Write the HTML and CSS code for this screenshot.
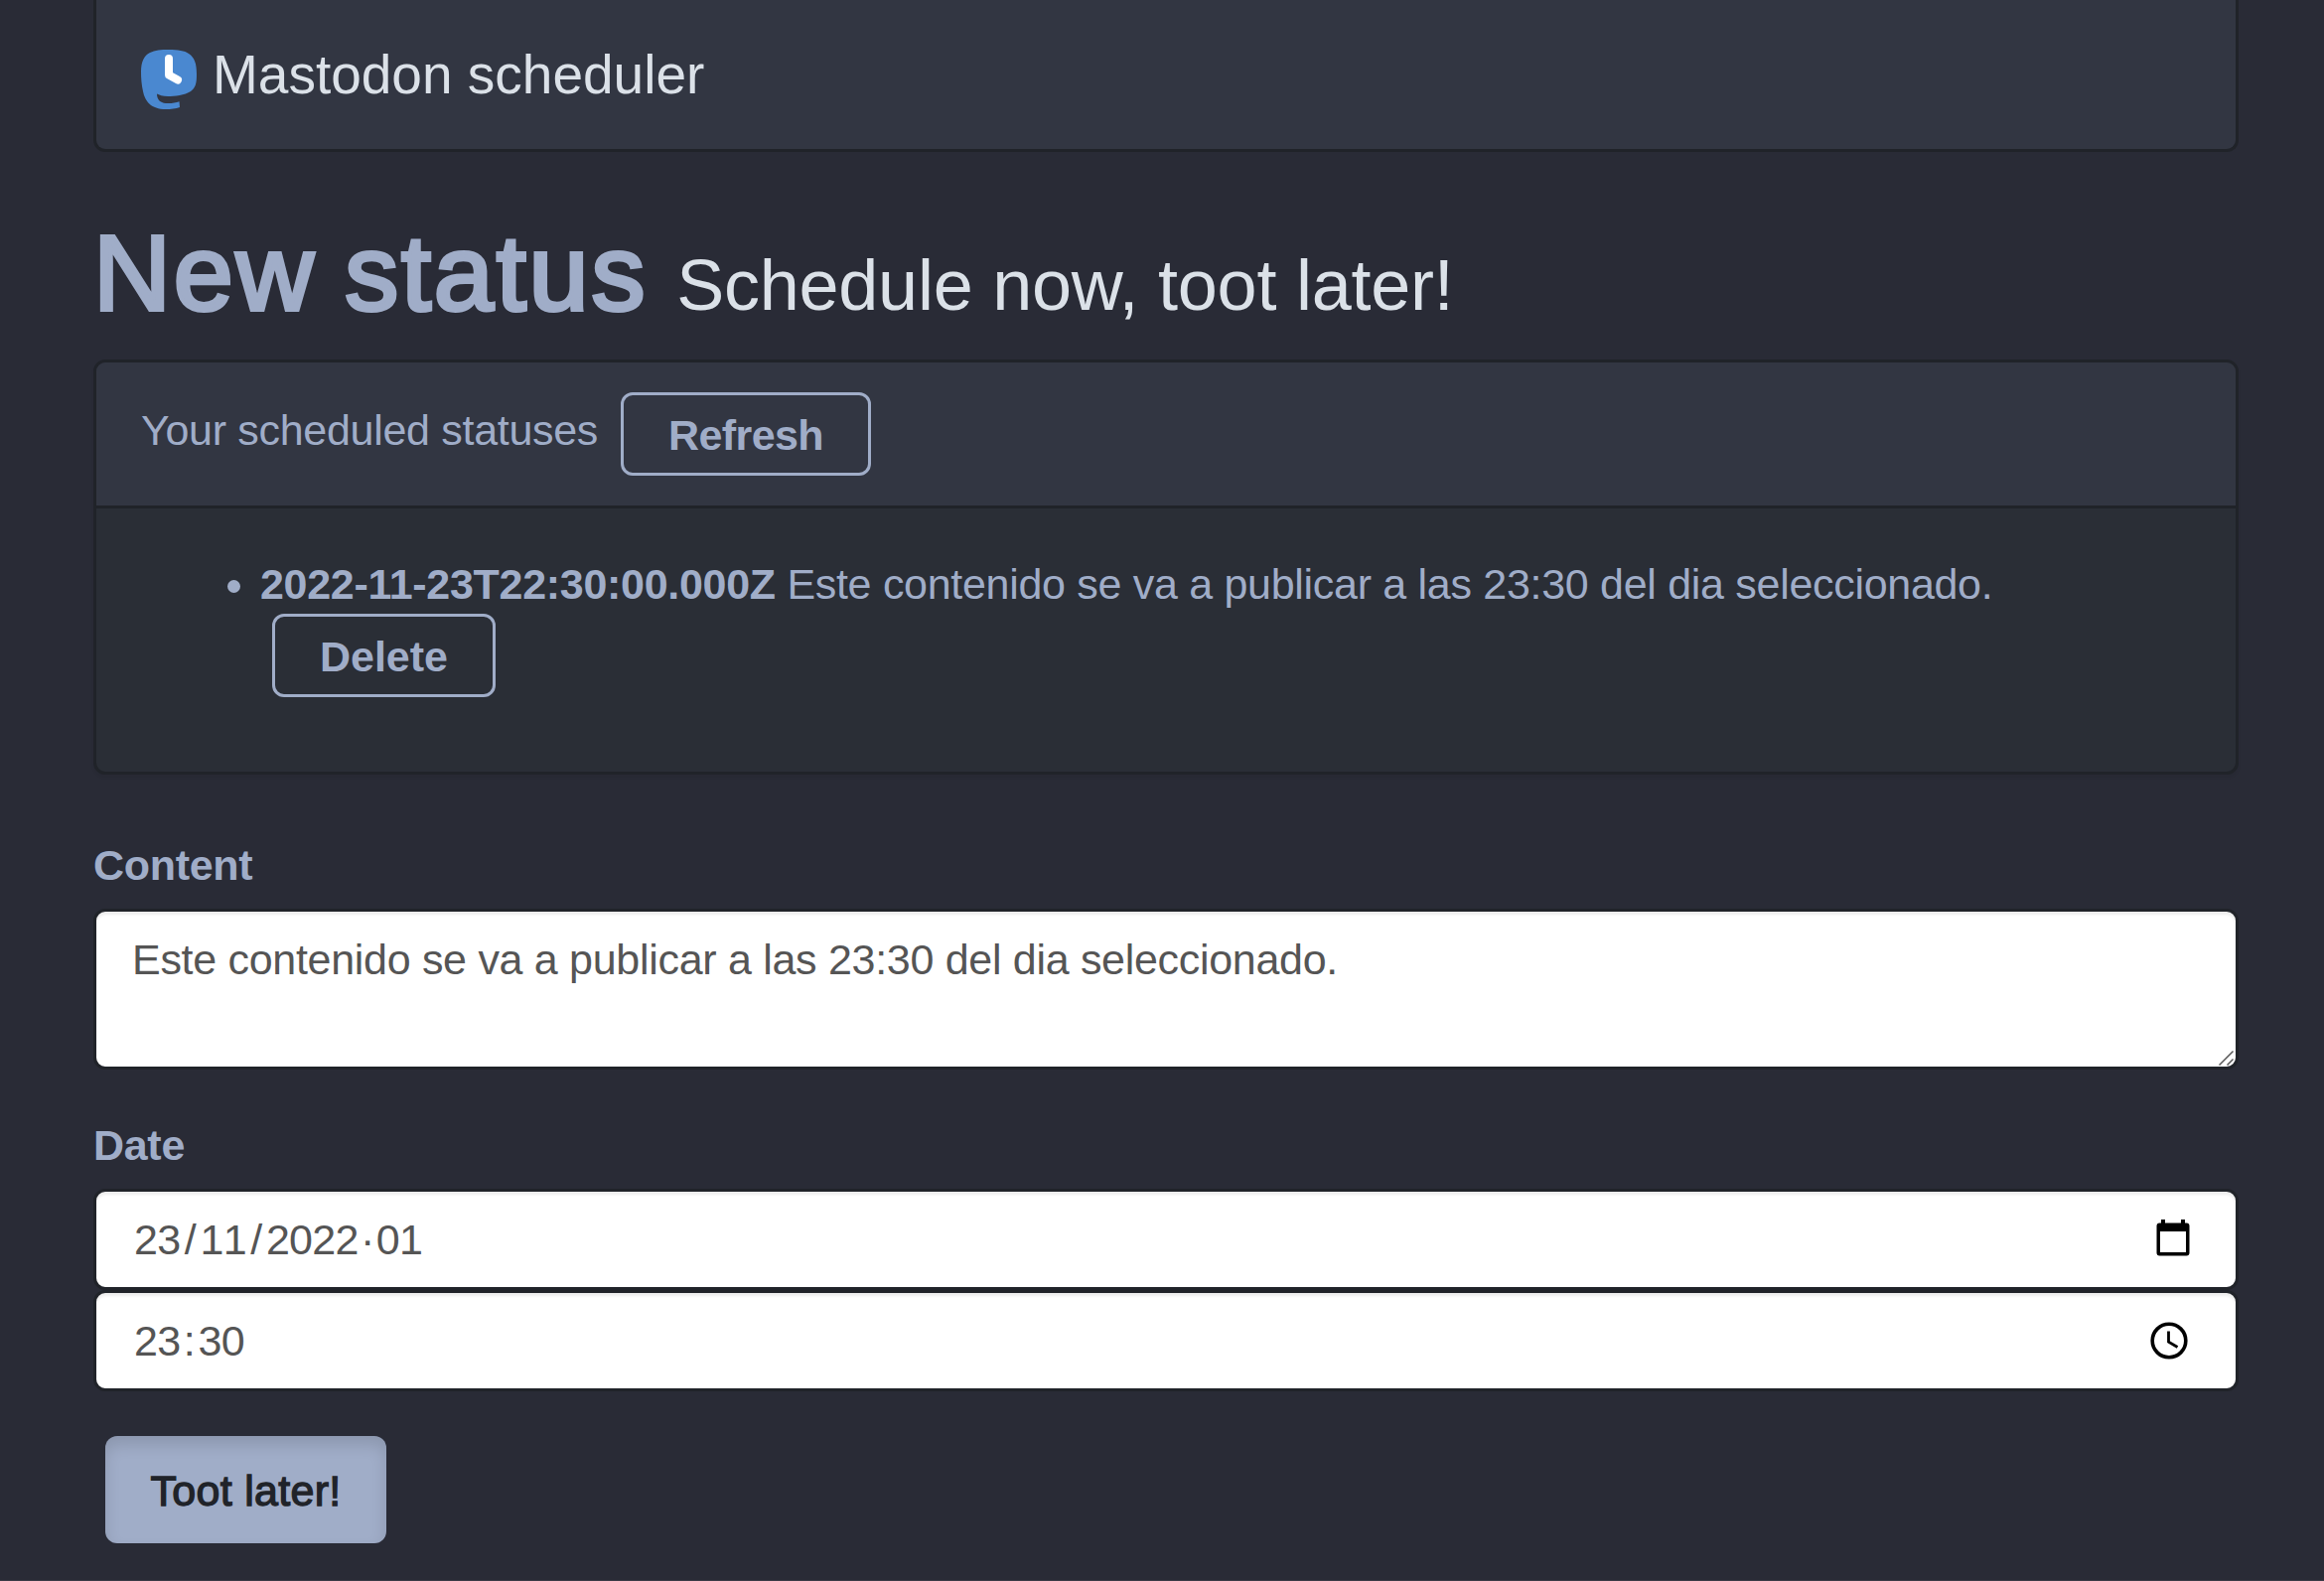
FILE: index.html
```html
<!DOCTYPE html>
<html lang="en">
<head>
<meta charset="utf-8">
<title>Mastodon scheduler</title>
<link rel="stylesheet" href="styles.css">
</head>
<body>
<div class="page">
  <header class="navbar">
    <svg class="logo" viewBox="0 0 56 60" width="56" height="60">
      <path fill="#4a88d0" d="M28 0C37 0 44 1 48 4C54 8 56 14 56 25C56 34 55 38 50 42C44 46 34 47 27 47C22 47 18 45.500 16 44.500C16 50 19 53.500 25 54C30 54.400 35 53.500 38.500 52.300L39 58C35 59.600 30 60 25 60C10 60 4 52 2 42C0.500 35 0 29 0 22C0 12 3 6 9 3C14 0.500 20 0 28 0Z"/>
      <path fill="none" stroke="#fff" stroke-width="8" stroke-linecap="round" stroke-linejoin="round" d="M28 9V25.500L37 30.500"/>
    </svg>
    <span class="brand">Mastodon scheduler</span>
  </header>

  <h1 class="title"><span class="title-main">New status</span><small class="title-sub">Schedule now, toot later!</small></h1>

  <section class="panel">
    <div class="panel-head">
      <span class="panel-title">Your scheduled statuses</span>
      <button class="btn btn-refresh">Refresh</button>
    </div>
    <div class="panel-body">
      <ul class="statuses">
        <li class="status">
          <div class="status-text"><strong class="stamp">2022-11-23T22:30:00.000Z</strong> <span class="message">Este contenido se va a publicar a las 23:30 del dia seleccionado.</span></div>
          <button class="btn btn-delete">Delete</button>
        </li>
      </ul>
    </div>
  </section>

  <div class="label label-content">Content</div>
  <div class="field area">
    <span class="area-text">Este contenido se va a publicar a las 23:30 del dia seleccionado.</span>
    <svg class="grip" viewBox="0 0 15 15" width="15" height="15"><path fill="none" stroke="#555" stroke-width="1.500" d="M0.500 14.500L14.500 0.500M8.500 14.500L14.500 8.500"/></svg>
  </div>

  <div class="label label-date">Date</div>
  <div class="field">
    <span class="value">23<span class="slash">/</span>11<span class="slash">/</span>2022<span class="mark">·</span>01</span>
    <svg class="calendar" viewBox="0 0 34 37" width="34" height="37"><path fill="#000" fill-rule="evenodd" d="M5 0H9V3.500H25V0H29V3.500H30.500Q33.500 3.500 33.500 6.500V33.500Q33.500 36.500 30.500 36.500H3.500Q0.500 36.500 0.500 33.500V6.500Q0.500 3.500 3.500 3.500H5ZM4 12V33H30V12Z"/></svg>
  </div>
  <div class="field">
    <span class="value">23<span class="mark">:</span>30</span>
    <svg class="clock" viewBox="0 0 38 38" width="38" height="38"><circle cx="19" cy="19" r="16.800" fill="none" stroke="#000" stroke-width="3.600"/><path fill="none" stroke="#000" stroke-width="2.800" d="M18.500 9.500V20.300L27.500 25.500"/></svg>
  </div>

  <button class="submit">Toot later!</button>
</div>
</body>
</html>
```
FILE: styles.css
```css
* { box-sizing: border-box; }

body {
  margin: 0;
  height: 1592px;
  overflow: hidden;
  background: #292b36;
  border-bottom: 1px solid #3a3b46;
  color: #a0adc8;
  font: 43px/60px "Liberation Sans", Arial, sans-serif;
  letter-spacing: -0.3px;
}

.page {
  width: 2160px;
  margin-left: 94px;
  display: flex;
  flex-direction: column;
}

.navbar {
  height: 153px;
  padding: 45px 45px 0;
  display: flex;
  align-items: flex-start;
  background: #323642;
  border: 3px solid #202329;
  border-top: 0;
  border-radius: 0 0 12px 12px;
}
.logo { margin-top: 5px; }
.brand {
  margin-left: 16px;
  color: #dbe1e8;
  font-size: 55px;
  letter-spacing: 0;
  white-space: nowrap;
}

.title {
  display: flex;
  align-items: baseline;
  height: 120px;
  margin: 62px 0 27px;
  font-weight: 400;
  line-height: 120px;
  white-space: nowrap;
}
.title-main {
  font-size: 108px;
  letter-spacing: 2.8px;
  word-spacing: -4px;
  -webkit-text-stroke: 4px #a0adc8;
}
.title-sub {
  margin-left: 29px;
  color: #dbe1e8;
  font-size: 72px;
  letter-spacing: -0.25px;
}

.panel {
  height: 418px;
  border: 3px solid #202329;
  border-radius: 12px;
  background: #2a2e36;
  box-shadow: 0 3px 3px rgba(0, 0, 0, 0.05);
}
.panel-head {
  height: 147px;
  padding: 30px 45px;
  display: flex;
  align-items: flex-start;
  background: #323642;
  border-bottom: 3px solid #202329;
  border-radius: 9px 9px 0 0;
}
.panel-title {
  margin-top: 8px;
  width: 483px;
  white-space: nowrap;
}

.btn {
  height: 84px;
  padding: 2px 0 0;
  border: 3px solid #a0adc8;
  border-radius: 12px;
  background: transparent;
  color: #a0adc8;
  font: bold 43px/76px "Liberation Sans", Arial, sans-serif;
}
.btn-refresh {
  width: 252px;
  letter-spacing: -0.6px;
}
.btn-delete {
  display: block;
  width: 225px;
  margin-left: 12px;
}

.panel-body { padding: 46px 45px 0; }
.statuses {
  list-style: none;
  margin: 0;
  padding: 0 0 0 120px;
}
.status::before {
  content: "";
  float: left;
  width: 13px;
  height: 13px;
  margin: 26px 0 0 -33px;
  border-radius: 50%;
  background: #a0adc8;
}
.status-text {
  height: 60px;
  white-space: nowrap;
}

.label {
  height: 60px;
  font-weight: bold;
}
.label-content { margin: 61px 0 14px; }
.label-date { margin: 46px 0 14px; }

.field {
  position: relative;
  height: 102px;
  padding: 18px 39px 18px 38px;
  display: flex;
  justify-content: space-between;
  background: #fff;
  border: 3px solid #202329;
  border-radius: 12px;
  box-shadow: inset 0 3px 3px rgba(0, 0, 0, 0.075);
  color: #555;
  white-space: nowrap;
}
.area {
  height: 162px;
  padding: 18px 36px;
}
.grip {
  position: absolute;
  right: 2px;
  bottom: 1px;
}
.value {
  font-kerning: none;
  letter-spacing: -0.7px;
}
.slash,
.mark {
  display: inline-block;
  text-align: center;
}
.slash { width: 20px; }
.mark { width: 18px; }
.calendar { margin: 10px 7px 0 0; }
.clock { margin: 11px 9px 0 0; }

.submit {
  width: 283px;
  height: 108px;
  margin: 45px 0 0 12px;
  padding: 2px 0 0;
  border: 0;
  border-radius: 12px;
  background: #a0adc8;
  box-shadow: inset 0 9px 15px rgba(0, 0, 0, 0.125);
  color: #202329;
  font: 43px/106px "Liberation Sans", Arial, sans-serif;
  letter-spacing: 0.3px;
  -webkit-text-stroke: 1.3px #202329;
}
```
